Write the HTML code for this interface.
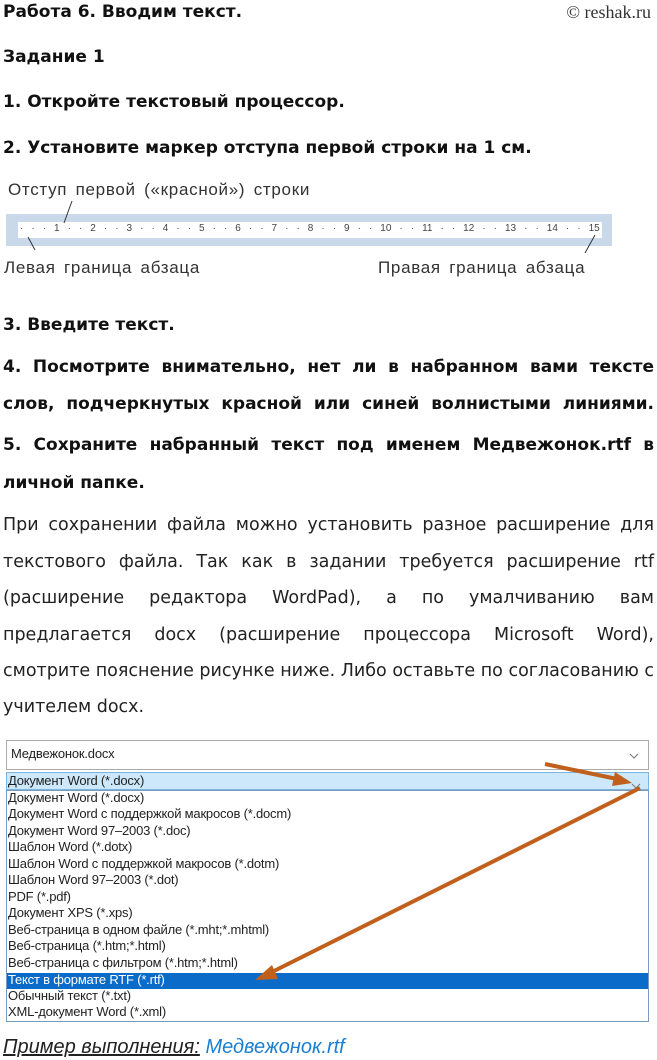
<!DOCTYPE html>
<html><head><meta charset="utf-8"><style>
body{margin:0;width:657px;height:1060px;position:relative;background:#fff;font-family:"Liberation Sans","DejaVu Sans",sans-serif;color:#111;overflow:hidden}
.a{position:absolute;white-space:nowrap}
.b{font-weight:bold;font-size:17px;font-family:"DejaVu Sans",sans-serif}
.j{position:absolute;left:3px;width:651px;text-align:justify;text-align-last:justify;white-space:nowrap}
.p{font-size:17.5px;font-family:"DejaVu Sans",sans-serif;color:#222}
.r{position:absolute;left:8px;font-size:13px;color:#222;font-family:"Liberation Sans",sans-serif;letter-spacing:-0.2px}
.ru{font-size:17px;color:#333;letter-spacing:0.7px;word-spacing:3px}
</style></head><body>
<div class="a b" style="left:3px;top:2px">Работа 6. Вводим текст.</div>
<div class="a" style="right:6px;top:2px;font-family:'Liberation Serif',serif;font-size:18px;color:#333">© reshak.ru</div>
<div class="a b" style="left:3px;top:47px">Задание 1</div>
<div class="a b" style="left:3px;top:92px">1. Откройте текстовый процессор.</div>
<div class="a b" style="left:3px;top:138px">2. Установите маркер отступа первой строки на 1 см.</div>
<div class="a ru" style="left:8px;top:180px">Отступ первой («красной») строки</div>
<div class="a" style="left:6px;top:214px;width:606px;height:32px;background:#c9d9ea"></div>
<div class="a" style="left:18px;top:222px;width:584px;height:16px;background:#fff"></div>
<div class="a" style="left:20px;top:223px;width:580px;display:flex;justify-content:space-between;font-size:10px;color:#444"><span>·</span><span>·</span><span>·</span><span>1</span><span>·</span><span>·</span><span>2</span><span>·</span><span>·</span><span>3</span><span>·</span><span>·</span><span>4</span><span>·</span><span>·</span><span>5</span><span>·</span><span>·</span><span>6</span><span>·</span><span>·</span><span>7</span><span>·</span><span>·</span><span>8</span><span>·</span><span>·</span><span>9</span><span>·</span><span>·</span><span>10</span><span>·</span><span>·</span><span>11</span><span>·</span><span>·</span><span>12</span><span>·</span><span>·</span><span>13</span><span>·</span><span>·</span><span>14</span><span>·</span><span>·</span><span>15</span></div>
<svg class="a" style="left:0;top:195px" width="657" height="60"><line x1="72" y1="6" x2="64" y2="28" stroke="#333"/><line x1="28" y1="42" x2="35" y2="55" stroke="#333"/><line x1="595" y1="40" x2="585" y2="58" stroke="#333"/></svg>
<div class="a ru" style="left:4px;top:258px">Левая граница абзаца</div>
<div class="a ru" style="left:378px;top:258px">Правая граница абзаца</div>
<div class="a b" style="left:3px;top:315px">3. Введите текст.</div>
<div class="j b" style="top:357px">4. Посмотрите внимательно, нет ли в набранном вами тексте</div>
<div class="j b" style="top:394px">слов, подчеркнутых красной или синей волнистыми линиями.</div>
<div class="j b" style="top:435px">5. Сохраните набранный текст под именем Медвежонок.rtf в</div>
<div class="a b" style="left:3px;top:473px">личной папке.</div>
<div class="j p" style="top:515px">При сохранении файла можно установить разное расширение для</div>
<div class="j p" style="top:552px">текстового файла. Так как в задании требуется расширение rtf</div>
<div class="j p" style="top:588px">(расширение редактора WordPad), а по умалчиванию вам</div>
<div class="j p" style="top:625px">предлагается docx (расширение процессора Microsoft Word),</div>
<div class="j p" style="top:661px">смотрите пояснение рисунке ниже. Либо оставьте по согласованию с</div>
<div class="a p" style="left:3px;top:697px">учителем docx.</div>
<div class="a" style="left:6px;top:740px;width:643px;height:30px;border:1px solid #aaa;box-sizing:border-box"></div>
<div class="r" style="top:746px;left:11px">Медвежонок.docx</div>
<div class="a" style="left:6px;top:772px;width:643px;height:18px;background:#cce8fa;border:1px solid #7ab4e0;box-sizing:border-box"></div>
<div class="r" style="top:773px">Документ Word (*.docx)</div>
<div class="a" style="left:6px;top:790px;width:643px;height:232px;border:1px solid #7a9bc0;box-sizing:border-box"></div>
<div class="a" style="left:7px;top:973px;width:641px;height:16px;background:#0a6cc8"></div>
<div class="r" style="top:790px">Документ Word (*.docx)</div>
<div class="r" style="top:806px">Документ Word с поддержкой макросов (*.docm)</div>
<div class="r" style="top:823px">Документ Word 97–2003 (*.doc)</div>
<div class="r" style="top:839px">Шаблон Word (*.dotx)</div>
<div class="r" style="top:856px">Шаблон Word с поддержкой макросов (*.dotm)</div>
<div class="r" style="top:872px">Шаблон Word 97–2003 (*.dot)</div>
<div class="r" style="top:889px">PDF (*.pdf)</div>
<div class="r" style="top:905px">Документ XPS (*.xps)</div>
<div class="r" style="top:922px">Веб-страница в одном файле (*.mht;*.mhtml)</div>
<div class="r" style="top:938px">Веб-страница (*.htm;*.html)</div>
<div class="r" style="top:955px">Веб-страница с фильтром (*.htm;*.html)</div>
<div class="r" style="top:972px;color:#fff">Текст в формате RTF (*.rtf)</div>
<div class="r" style="top:988px">Обычный текст (*.txt)</div>
<div class="r" style="top:1004px">XML-документ Word (*.xml)</div>
<svg class="a" style="left:0;top:730px" width="657" height="270">
<path d="M630 24 l4 4 l4 -4" stroke="#777" fill="none"/><path d="M632 54 l4 4 l4 -4" stroke="#777" fill="none"/>
<line x1="545" y1="34" x2="622" y2="50" stroke="#c0601c" stroke-width="4"/><polygon points="632,53 615,42 612,56" fill="#c0601c"/>
<line x1="640" y1="58" x2="268" y2="244" stroke="#c0601c" stroke-width="4"/><polygon points="255,250 272,235 278,249" fill="#c0601c"/>
</svg>
<div class="a" style="left:3px;top:1036px;font-size:20px;font-style:italic;color:#222"><u>Пример выполнения:</u> <span style="color:#1a7fd0">Медвежонок.rtf</span></div>
</body></html>
